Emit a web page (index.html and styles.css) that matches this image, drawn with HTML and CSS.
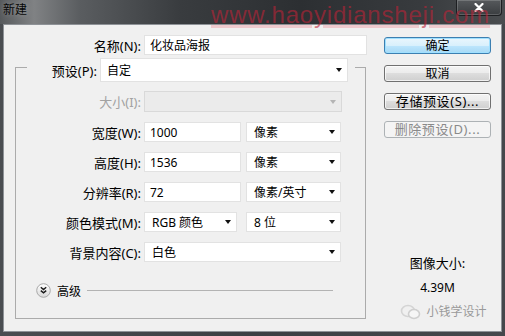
FILE: index.html
```html
<!DOCTYPE html>
<html lang="zh-CN">
<head>
<meta charset="UTF-8">
<title>新建</title>
<link rel="stylesheet" href="styles.css">
</head>
<body>
<div class="window">
  <header class="titlebar">
    <span class="title">新建</span>
    <span class="watermark">www.haoyidiansheji.com</span>
    <button class="close">
      <svg width="10" height="9" viewBox="0 0 10 9"><path d="M1.5 1L8.5 8M8.5 1L1.5 8" stroke="#fff" stroke-width="2.2" stroke-linecap="round"/></svg>
    </button>
  </header>

  <main class="content">
    <div class="form">
      <div class="row name-row">
        <span class="lbl">名称(N):</span>
        <div class="field text-field name-field">化妆品海报</div>
      </div>

      <fieldset class="group">
        <legend class="preset">
          <span class="lbl">预设(P):</span>
          <div class="field select preset-select"><span>自定</span><i class="arrow"></i></div>
        </legend>

        <div class="row size-row">
          <span class="lbl off">大小(I):</span>
          <div class="field select off size-select"><span></span><i class="arrow"></i></div>
        </div>
        <div class="row">
          <span class="lbl">宽度(W):</span>
          <div class="field text-field num-field">1000</div>
          <div class="field select unit-select"><span>像素</span><i class="arrow"></i></div>
        </div>
        <div class="row">
          <span class="lbl">高度(H):</span>
          <div class="field text-field num-field">1536</div>
          <div class="field select unit-select"><span>像素</span><i class="arrow"></i></div>
        </div>
        <div class="row">
          <span class="lbl">分辨率(R):</span>
          <div class="field text-field num-field">72</div>
          <div class="field select unit-select"><span>像素/英寸</span><i class="arrow"></i></div>
        </div>
        <div class="row">
          <span class="lbl">颜色模式(M):</span>
          <div class="field select mode-select"><span>RGB 颜色</span><i class="arrow"></i></div>
          <div class="field select unit-select"><span>8 位</span><i class="arrow"></i></div>
        </div>
        <div class="row">
          <span class="lbl">背景内容(C):</span>
          <div class="field select bg-select"><span>白色</span><i class="arrow"></i></div>
        </div>

        <div class="advanced">
          <svg class="expand" width="15" height="15" viewBox="0 0 15 15">
            <defs>
              <linearGradient id="ball" x1="0" y1="0" x2="0" y2="1">
                <stop offset="0" stop-color="#ffffff"/>
                <stop offset="1" stop-color="#d9d9d9"/>
              </linearGradient>
            </defs>
            <circle cx="7.5" cy="7.5" r="6.8" fill="url(#ball)" stroke="#a9a9a9"/>
            <path d="M4.8 4.3L7.5 6.6L10.2 4.3M4.8 7.6L7.5 9.9L10.2 7.6" fill="none" stroke="#1a1a1a" stroke-width="1.4"/>
          </svg>
          <span>高级</span>
          <i class="rule"></i>
        </div>
      </fieldset>
    </div>

    <aside class="side">
      <button class="btn primary">确定</button>
      <button class="btn">取消</button>
      <button class="btn wide">存储预设(S)...</button>
      <button class="btn wide" disabled>删除预设(D)...</button>

      <div class="info">
        <p>图像大小:</p>
        <p>4.39M</p>
        <p class="credit">
          <svg width="22" height="16" viewBox="0 0 22 16"><ellipse cx="8" cy="7" rx="6.5" ry="5.5" fill="none" stroke="#d4d4d4" stroke-width="1.6"/><ellipse cx="14" cy="10" rx="5.5" ry="4.5" fill="#f6f6f6" stroke="#cfcfcf" stroke-width="1.6"/></svg>
          <span>小钱学设计</span>
        </p>
      </div>
    </aside>
  </main>
</div>
</body>
</html>
```

FILE: styles.css
```css
body {
    margin: 0;
    background: #2f3236;
    font-family: "Noto Sans", "Noto Sans CJK SC", sans-serif;
    font-size: 12px;
    color: #000;
}

.window {
    width: 505px;
    height: 336px;
    display: flex;
    flex-direction: column;
    background: linear-gradient(90deg, #4a4d51, #3c3f43 50%, #45484c);
}

/* title bar */
.titlebar {
    position: relative;
    height: 24px;
    flex: none;
    display: flex;
    align-items: flex-start;
    background: linear-gradient(90deg, #56595c 0, #808284 34px, #5a5d60 80px, #393c3f 180px, #2c2f32 300px, #383b3e 420px, #4a4d50 505px);
}

.title {
    padding: 2px 0 0 3px;
    line-height: 16px;
    color: #070707;
    text-shadow: 0 0 6px rgba(255, 255, 255, 0.35);
}

.watermark {
    position: absolute;
    left: 211px;
    top: 1px;
    z-index: 2;
    font: 24px/28px "Liberation Sans", Arial, sans-serif;
    letter-spacing: 0.8px;
    color: rgba(190, 35, 55, 0.6);
    text-decoration: underline 3px rgba(235, 130, 140, 0.35);
    text-underline-offset: 2px;
}

.close {
    margin-left: auto;
    margin-right: 3px;
    width: 46px;
    height: 16px;
    padding: 0;
    display: flex;
    align-items: center;
    justify-content: center;
    border: 1px solid #1d1f22;
    border-top: 0;
    border-radius: 0 0 4px 4px;
    background: linear-gradient(#56595c, #3a3d40);
    box-shadow: inset 0 0 0 1px rgba(255, 255, 255, 0.18);
}

/* dialog body */
.content {
    flex: 1;
    margin: 0 3px 4px;
    display: flex;
    background: #f0f0f0;
    border: 1px solid #8e9297;
}

.form {
    width: 370px;
    padding-top: 10px;
}

.row {
    display: flex;
    align-items: center;
    gap: 3px;
    height: 20px;
}

.lbl {
    width: 125px;
    flex: none;
    text-align: right;
    font-size: 13px;
    white-space: nowrap;
}

.lbl.off {
    color: #a2a2a2;
}

.name-row .lbl {
    width: 137px;
}

.field {
    box-sizing: border-box;
    height: 20px;
    display: flex;
    align-items: center;
    background: #fff;
    border: 1px solid #e2e2e2;
    white-space: nowrap;
}

.text-field {
    padding-left: 5px;
}

.name-field {
    width: 223px;
}

.num-field {
    width: 97px;
    margin-right: 2px;
}

.select {
    justify-content: space-between;
    padding: 0 5px 0 7px;
}

.arrow {
    width: 0;
    height: 0;
    border-left: 3.5px solid transparent;
    border-right: 3.5px solid transparent;
    border-top: 4px solid #111;
}

.select.off {
    background: #ebebeb;
    border-color: #d9d9d9;
}

.select.off .arrow {
    border-top-color: #b4b4b4;
}

.unit-select {
    width: 95px;
}

.mode-select {
    width: 93px;
    margin-right: 6px;
}

.size-select {
    width: 198px;
    height: 21px;
}

.bg-select {
    width: 197px;
}

/* group box */
.group {
    box-sizing: border-box;
    width: 351px;
    margin: -3px 0 0 11px;
    padding: 9px 0 20px 0;
    border: 1px solid #ababab;
    min-width: 0;
}

.group .row + .row {
    margin-top: 10px;
}

.group .size-row {
    height: 21px;
    margin-bottom: 1px;
}

.preset {
    display: flex;
    align-items: center;
    gap: 3px;
    margin-left: 11px;
    padding: 6px 7px 0 0;
}

.preset .lbl {
    width: 70px;
}

.preset-select {
    width: 248px;
    height: 24px;
    padding-left: 6px;
}

.advanced {
    display: flex;
    align-items: center;
    gap: 6px;
    height: 15px;
    margin-top: 21px;
    padding: 0 32px 0 20px;
}

.advanced span {
    font-size: 12px;
}

.rule {
    flex: 1;
    height: 1px;
    background: #b3b3b3;
}

/* right column */
.side {
    width: 107px;
    margin-left: 10px;
    padding-top: 12px;
    display: flex;
    flex-direction: column;
    gap: 11px;
}

.btn {
    height: 17px;
    padding: 0;
    font-family: inherit;
    font-size: 12px;
    line-height: 15px;
    color: #000;
    border: 1px solid #707070;
    border-radius: 3px;
    background: linear-gradient(#f3f3f3 0, #ebebeb 50%, #dddddd 50%, #cfcfcf 100%);
    box-shadow: inset 0 0 0 1px rgba(255, 255, 255, 0.7);
}

.btn.wide {
    font-size: 13px;
    letter-spacing: 0.6px;
}

.btn.primary {
    border-color: #3c7fb1;
    background: linear-gradient(#eaf6fd 0, #d9f0fc 50%, #bee6fd 50%, #a7d9f5 100%);
    box-shadow: inset 0 0 0 1px #9fe0ff;
}

.btn:disabled {
    color: #8a8a8a;
    border-color: #adb2b5;
    background: #f4f4f4;
    box-shadow: none;
}

.info {
    margin-top: 106px;
    text-align: center;
}

.info p {
    margin: 0 0 9px;
    line-height: 16px;
    font-size: 13px;
}

.info p + p {
    font-size: 12px;
}

.info .credit {
    display: flex;
    align-items: center;
    justify-content: center;
    gap: 4px;
    margin: -1px 0 0 12px;
    color: #9a9a9a;
}
```
